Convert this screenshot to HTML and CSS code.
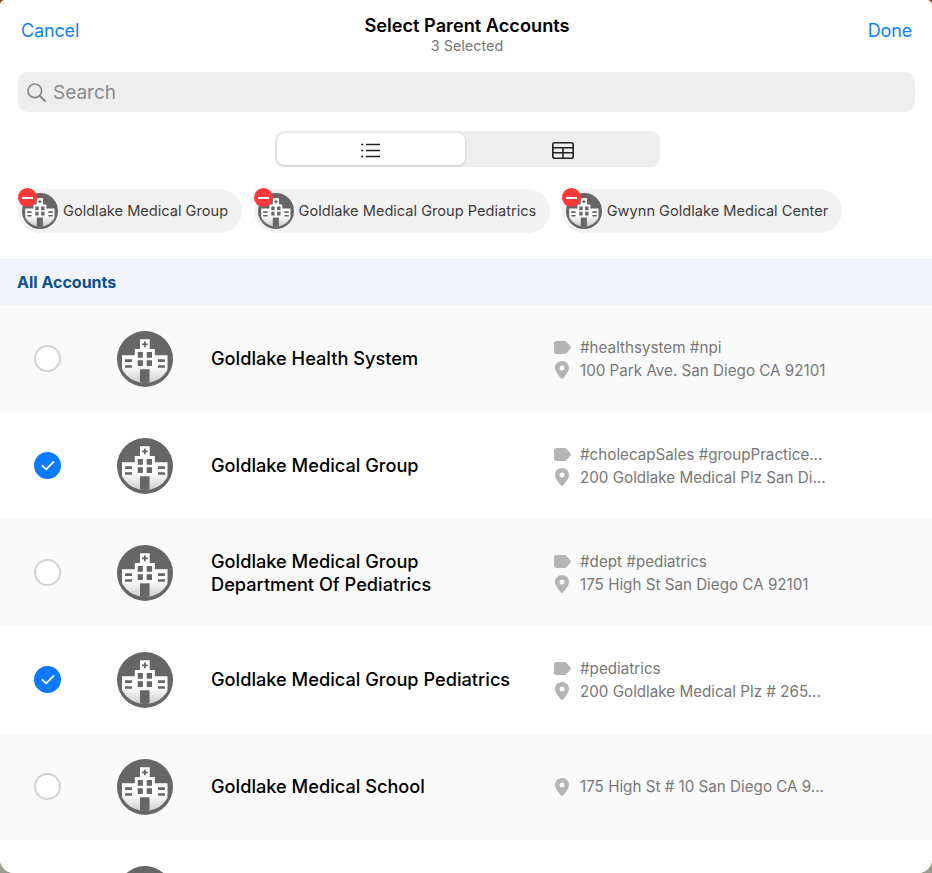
FILE: index.html

```html
<!DOCTYPE html>
<html lang="en">

<head>
    <meta charset="UTF-8">
    <meta name="viewport" content="width=device-width, initial-scale=1.0">
    <title>Select Parent Accounts</title>
    <link rel="stylesheet" href="styles.css">
</head>

<body>
    <svg class="icon-defs" width="0" height="0">
        <defs>
            <clipPath id="hospitalClip">
                <circle cx="28" cy="26" r="26"></circle>
            </clipPath>
            <linearGradient id="wallShade" x1="0" y1="0" x2="0" y2="1">
                <stop offset="0.6" stop-color="#ffffff"></stop>
                <stop offset="1" stop-color="#cdcdcd"></stop>
            </linearGradient>
            <symbol id="hospital" viewBox="0 0 56 56">
                <circle cx="28" cy="28" r="28" fill="#666666"></circle>
                <g clip-path="url(#hospitalClip)">
                    <path fill="url(#wallShade)" d="M23 8.3H32.7V18H37.8V24.3H50.5V52H5V24.3H17.8V18H23Z"></path>
                    <path fill="#666666" d="M27 10.5H28.8V12.5H30.8V14.3H28.8V16.3H27V14.3H25V12.5H27Z"></path>
                    <path fill="#666666" d="M20.7 21H25.9V26.7H20.7ZM29.7 21H35V26.7H29.7ZM20.7 29.2H25.9V35H20.7ZM29.7 29.2H35V35H29.7Z"></path>
                    <path fill="#666666" d="M8 28.3H15V31H8ZM8 34.3H15V36.7H8ZM41 28.3H48V31H41ZM41 34.3H48V36.7H41Z"></path>
                    <rect x="23" y="38.3" width="9.5" height="14" fill="#666666"></rect>
                </g>
            </symbol>
            <symbol id="tag" viewBox="0 0 17 13">
                <path fill="#b4b4b4" d="M2.5 0H10.5C11.3 0 12 .3 12.6 .9L16.3 5.2C17 6 17 7 16.3 7.8L12.6 12.1C12 12.7 11.3 13 10.5 13H2.5C1.1 13 0 11.9 0 10.5V2.5C0 1.1 1.1 0 2.5 0Z"></path>
            </symbol>
            <symbol id="pin" viewBox="0 0 14 18">
                <path fill="#b4b4b4" fill-rule="evenodd" d="M7 0C10.9 0 14 3 14 6.8C14 10.6 10.2 15 7.9 17.5C7.4 18.1 6.6 18.1 6.1 17.5C3.8 15 0 10.6 0 6.8C0 3 3.1 0 7 0ZM7 4.4A2.5 2.5 0 1 0 7 9.4A2.5 2.5 0 1 0 7 4.4Z"></path>
            </symbol>
        </defs>
    </svg>

    <div class="sheet">
        <div class="top-bar">
            <a class="bar-link">Cancel</a>
            <div class="bar-title">
                <h1>Select Parent Accounts</h1>
                <p>3 Selected</p>
            </div>
            <a class="bar-link bar-link-right">Done</a>
        </div>

        <div class="search-box">
            <svg class="search-icon" viewBox="0 0 19 19" width="19" height="19">
                <circle cx="7.8" cy="7.8" r="6.8" fill="none" stroke="#8a8a8e" stroke-width="1.7"></circle>
                <path d="M12.8 12.8L18 18" fill="none" stroke="#8a8a8e" stroke-width="2" stroke-linecap="round"></path>
            </svg>
            <span>Search</span>
        </div>

        <div class="segment-wrap">
            <div class="segment">
                <div class="segment-item active">
                    <svg viewBox="0 0 19 15" width="19" height="15">
                        <path d="M5 1.5H19M5 7.5H19M5 13.5H19" stroke="#222" stroke-width="1.4" fill="none"></path>
                        <circle cx="1.2" cy="1.5" r="1.1" fill="#222"></circle>
                        <circle cx="1.2" cy="7.5" r="1.1" fill="#222"></circle>
                        <circle cx="1.2" cy="13.5" r="1.1" fill="#222"></circle>
                    </svg>
                </div>
                <div class="segment-item">
                    <svg viewBox="0 0 22 17" width="22" height="17">
                        <rect x="0.8" y="0.8" width="20.4" height="15.4" rx="2" fill="none" stroke="#222" stroke-width="1.6"></rect>
                        <path d="M1 5.8H21M1 10.8H21M11 5.8V16" stroke="#222" stroke-width="1.5" fill="none"></path>
                    </svg>
                </div>
            </div>
        </div>

        <div class="chips">
            <div class="chip">
                <svg class="chip-avatar"><use href="#hospital"></use></svg>
                <span class="chip-remove"></span>
                <span class="chip-label">Goldlake Medical Group</span>
            </div>
            <div class="chip">
                <svg class="chip-avatar"><use href="#hospital"></use></svg>
                <span class="chip-remove"></span>
                <span class="chip-label">Goldlake Medical Group Pediatrics</span>
            </div>
            <div class="chip">
                <svg class="chip-avatar"><use href="#hospital"></use></svg>
                <span class="chip-remove"></span>
                <span class="chip-label">Gwynn Goldlake Medical Center</span>
            </div>
        </div>

        <div class="section-header">All Accounts</div>

        <div class="account-list">
            <div class="account-row">
                <span class="radio"></span>
                <svg class="account-icon"><use href="#hospital"></use></svg>
                <div class="account-name">Goldlake Health System</div>
                <div class="account-meta">
                    <div class="meta-line"><svg class="meta-tag"><use href="#tag"></use></svg><span>#healthsystem #npi</span></div>
                    <div class="meta-line"><svg class="meta-pin"><use href="#pin"></use></svg><span>100 Park Ave. San Diego CA 92101</span></div>
                </div>
            </div>
            <div class="account-row">
                <span class="radio checked">
                    <svg viewBox="0 0 14 11" width="14" height="11"><path d="M1.5 5.8L5.2 9.3L12.5 1.8" fill="none" stroke="#fff" stroke-width="1.8" stroke-linecap="round" stroke-linejoin="round"></path></svg>
                </span>
                <svg class="account-icon"><use href="#hospital"></use></svg>
                <div class="account-name">Goldlake Medical Group</div>
                <div class="account-meta">
                    <div class="meta-line"><svg class="meta-tag"><use href="#tag"></use></svg><span>#cholecapSales #groupPractice...</span></div>
                    <div class="meta-line"><svg class="meta-pin"><use href="#pin"></use></svg><span>200 Goldlake Medical Plz San Di...</span></div>
                </div>
            </div>
            <div class="account-row">
                <span class="radio"></span>
                <svg class="account-icon"><use href="#hospital"></use></svg>
                <div class="account-name">Goldlake Medical Group<br>Department Of Pediatrics</div>
                <div class="account-meta">
                    <div class="meta-line"><svg class="meta-tag"><use href="#tag"></use></svg><span>#dept #pediatrics</span></div>
                    <div class="meta-line"><svg class="meta-pin"><use href="#pin"></use></svg><span>175 High St San Diego CA 92101</span></div>
                </div>
            </div>
            <div class="account-row">
                <span class="radio checked">
                    <svg viewBox="0 0 14 11" width="14" height="11"><path d="M1.5 5.8L5.2 9.3L12.5 1.8" fill="none" stroke="#fff" stroke-width="1.8" stroke-linecap="round" stroke-linejoin="round"></path></svg>
                </span>
                <svg class="account-icon"><use href="#hospital"></use></svg>
                <div class="account-name">Goldlake Medical Group Pediatrics</div>
                <div class="account-meta">
                    <div class="meta-line"><svg class="meta-tag"><use href="#tag"></use></svg><span>#pediatrics</span></div>
                    <div class="meta-line"><svg class="meta-pin"><use href="#pin"></use></svg><span>200 Goldlake Medical Plz # 265...</span></div>
                </div>
            </div>
            <div class="account-row">
                <span class="radio"></span>
                <svg class="account-icon"><use href="#hospital"></use></svg>
                <div class="account-name">Goldlake Medical School</div>
                <div class="account-meta">
                    <div class="meta-line"><svg class="meta-pin"><use href="#pin"></use></svg><span>175 High St # 10 San Diego CA 9...</span></div>
                </div>
            </div>
            <div class="account-row">
                <span class="radio radio-hidden"></span>
                <svg class="account-icon"><use href="#hospital"></use></svg>
            </div>
        </div>
    </div>
</body>

</html>
```

FILE: styles.css

```css
* {
    box-sizing: border-box;
}

html,
body {
    height: 100%;
}

body {
    font-family: Inter, 'Noto Sans', sans-serif;
    margin: 0;
    padding: 0;
    background: linear-gradient(#7a5428 0, #7a5428 40px, #9a9a92 40px);
    color: #000;
    overflow: hidden;
}

.icon-defs {
    display: block;
    height: 0;
}

.sheet {
    height: 873px;
    background-color: #ffffff;
    border-radius: 5px 5px 14px 14px;
    overflow: hidden;
}

.top-bar {
    display: grid;
    grid-template-columns: 1fr auto 1fr;
    align-items: start;
    padding: 14px 20px 0 21px;
    height: 72px;
}

.bar-link {
    font-size: 18px;
    line-height: 32px;
    color: #0a84ff;
    letter-spacing: -0.15px;
    padding-top: 1px;
}

.bar-link-right {
    text-align: right;
}

.bar-title {
    text-align: center;
    padding-left: 1px;
}

.bar-title h1 {
    margin: 0;
    font-size: 18.2px;
    line-height: 22px;
    font-weight: 600;
}

.bar-title p {
    margin: 1px 0 0;
    font-size: 14.4px;
    line-height: 18px;
    color: #777;
}

.search-box {
    display: flex;
    align-items: center;
    gap: 7px;
    height: 40px;
    margin: 0 17px 0 18px;
    padding-left: 9px;
    background-color: #eeeeee;
    border-radius: 10px;
    font-size: 19px;
    color: #8a8a8e;
}

.segment-wrap {
    display: flex;
    justify-content: center;
    margin-top: 19px;
    padding-left: 2px;
}

.segment {
    display: flex;
    width: 385px;
    height: 36px;
    padding: 2px;
    background-color: #eeeeee;
    border-radius: 9px;
}

.segment-item {
    flex: 1;
    display: flex;
    align-items: center;
    justify-content: center;
    padding: 3px 0 0 4px;
    border-radius: 7px;
}

.segment-item.active {
    flex: 0 0 188px;
    padding-left: 0;
    background-color: #ffffff;
    box-shadow: 0 1px 3px rgba(0, 0, 0, 0.18);
}

.chips {
    display: flex;
    gap: 12px;
    height: 93px;
    padding: 22px 0 0 18px;
    border-bottom: 1px solid #e3e8ec;
}

.chip {
    position: relative;
    display: flex;
    align-items: center;
    gap: 5px;
    height: 44px;
    padding: 0 13.5px 0 4px;
    background-color: #f2f2f2;
    border-radius: 22px;
}

.chip-avatar {
    width: 36px;
    height: 36px;
    flex-shrink: 0;
}

.chip-remove {
    position: absolute;
    top: -1px;
    left: 0;
    width: 19px;
    height: 19px;
    border-radius: 50%;
    background-color: #fb3a3a;
}

.chip-remove::after {
    content: "";
    position: absolute;
    top: 8.5px;
    left: 4px;
    width: 11px;
    height: 2px;
    background-color: #ffffff;
}

.chip-label {
    font-size: 14.6px;
    color: #3c3c3c;
    white-space: nowrap;
}

.section-header {
    height: 45px;
    line-height: 45px;
    padding-left: 17px;
    background-color: #f1f5f9;
    font-size: 16px;
    font-weight: 700;
    color: #0b4f94;
}

.account-row {
    display: grid;
    grid-template-columns: 117px 94px 343px 1fr;
    align-items: center;
    height: 107px;
    background-color: #ffffff;
}

.account-row:nth-child(odd) {
    background-color: #fafafa;
}

.account-row:last-child {
    background-color: #ffffff;
}

.radio {
    display: flex;
    align-items: center;
    justify-content: center;
    width: 27px;
    height: 27px;
    margin-left: 34px;
    border: 2px solid #d2d2d2;
    border-radius: 50%;
    background-color: #ffffff;
}

.radio.checked {
    border: none;
    background-color: #0a7aff;
}

.radio-hidden {
    visibility: hidden;
}

.account-icon {
    width: 56px;
    height: 56px;
}

.account-name {
    font-size: 18.2px;
    line-height: 23px;
    font-weight: 500;
}

.account-meta {
    display: flex;
    flex-direction: column;
    gap: 3px;
}

.meta-line {
    display: flex;
    align-items: center;
    height: 20px;
    font-size: 15.2px;
    color: #777;
    white-space: nowrap;
}

.meta-tag {
    width: 17px;
    height: 13px;
    margin-right: 9px;
}

.meta-pin {
    width: 14px;
    height: 18px;
    margin: 0 11px 0 1px;
}
```
